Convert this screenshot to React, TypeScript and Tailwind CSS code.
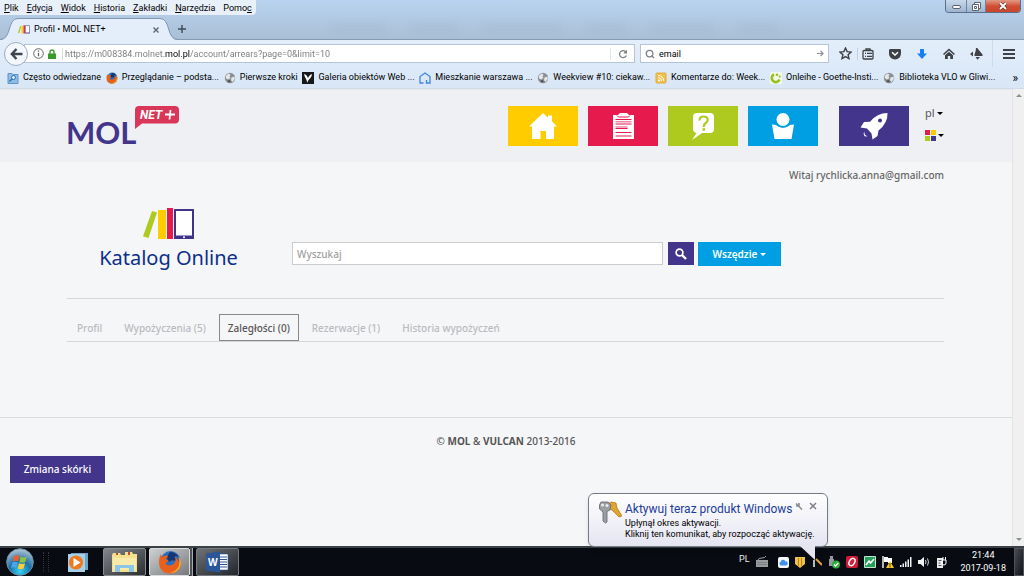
import type { ReactNode } from 'react';
import { Search } from 'lucide-react';

const menu = [
  ['', 'P', 'lik'],
  ['', 'E', 'dycja'],
  ['', 'W', 'idok'],
  ['', 'H', 'istoria'],
  ['', 'Z', 'akładki'],
  ['', 'N', 'arzędzia'],
  ['Pomo', 'c', ''],
];

function Globe() {
  return (
    <svg width="12" height="12" viewBox="0 0 12 12">
      <circle cx="6" cy="6" r="5.2" fill="#8b8f94" />
      <path d="M2 3.5 4.5 1.5 6.5 2.5 5.5 4.5 6.5 6 4 7.5 1.6 6zM7.5 5.5 10.5 4.5 10.8 7 8.5 10 7 8z" fill="#e4e6e8" />
      <path d="M3.5 8.5 6 8 6.5 10.5 4 10z" fill="#4c5054" />
    </svg>
  );
}

function FirefoxLogo({ size }: { size: number }) {
  return (
    <svg width={size} height={size} viewBox="0 0 24 24">
      <circle cx="12.5" cy="11" r="10" fill="#2a6fc0" />
      <path d="M12 2c4 0 7 2 9 5-2-1-4-1-5 0 2 1 2 3 1 4-1-1-4-1-6 1l-2-4 1-3z" fill="#17356f" />
      <path d="M3 4c0 2 .6 2.500 1.500 3C6 5.500 8 5.500 10 6c-.5 1.500-2 2-2 3.500l2.500 1c-.5 2-2.500 1.500-3 3 1.500 2.500 5.500 2.500 8 .5 2.500-2 2.500-5 1.500-7 3 2 3.500 4 3.500 5.500 1-2 .5-5-.5-6.500 3 3 3.700 7 2 11-2 4.500-6 6.500-10 6.500C5.500 23.500 1 19 1 12.500 1 9 1.600 6 3 4z" fill="#e8601c" />
      <path d="M20.500 6.500c3 3.500 3 8.500.5 12-2 3-6 4.500-9 4.500 5-1.500 9-4.500 9.500-9.500.2-2.500-.2-5-1-7z" fill="#fbb829" />
    </svg>
  );
}

const bookmarks: { label: string; icon: ReactNode }[] = [
  {
    label: 'Często odwiedzane',
    icon: (
      <svg width="12" height="12" viewBox="0 0 12 12">
        <path d="M1 1.500h4l1 1h5v9H1z" fill="#8dbde8" stroke="#5f94c8" />
        <circle cx="6.500" cy="5.500" r="2" fill="#d9ecfb" stroke="#2f6ca8" />
        <path d="m5 7-2.500 2.500" stroke="#2f6ca8" strokeWidth="1.300" />
      </svg>
    ),
  },
  { label: 'Przeglądanie – podsta...', icon: <FirefoxLogo size={12} /> },
  { label: 'Pierwsze kroki', icon: <Globe /> },
  {
    label: 'Galeria obiektów Web ...',
    icon: (
      <svg width="12" height="12" viewBox="0 0 12 12">
        <path d="M0 0h12v12H0z" fill="#16181b" />
        <path d="M2 2c2 .5 3 1.500 4 4 1-2 1.500-3 4-4-.5 3-1.500 4.500-3.500 6L5 11c.5-3-2-4.500-3-9z" fill="#fff" />
      </svg>
    ),
  },
  {
    label: 'Mieszkanie warszawa ...',
    icon: (
      <svg width="12" height="12" viewBox="0 0 12 12" fill="none" stroke="#3d86e8" strokeWidth="1.300">
        <path d="M4.500 11H1V4.500L6 1l5 3.500V11H7.500V8" />
      </svg>
    ),
  },
  { label: 'Weekview #10: ciekaw...', icon: <Globe /> },
  {
    label: 'Komentarze do: Week...',
    icon: (
      <svg width="12" height="12" viewBox="0 0 12 12">
        <rect x="1" y="1" width="10" height="10" rx="1" fill="#f4c04c" stroke="#e3a935" />
        <circle cx="4" cy="8.500" r="1" fill="#fff" />
        <path d="M3 5.500A3.500 3.500 0 0 1 6.500 9M3 3.300A5.700 5.700 0 0 1 8.700 9" fill="none" stroke="#fff" />
      </svg>
    ),
  },
  {
    label: 'Onleihe - Goethe-Insti...',
    icon: (
      <svg width="12" height="12" viewBox="0 0 12 12">
        <path d="M0 0h12v12H0z" fill="#f4f8ec" />
        <path d="M4 2.500A4 4 0 1 0 9.500 7.500" fill="none" stroke="#96c11f" strokeWidth="2.600" />
        <circle cx="7" cy="2.800" r="1.300" fill="#96c11f" />
        <circle cx="9.800" cy="4.600" r="1.100" fill="#96c11f" />
      </svg>
    ),
  },
  { label: 'Biblioteka VLO w Gliwi...', icon: <Globe /> },
];

function Books({ width, height }: { width: number; height: number }) {
  return (
    <svg width={width} height={height} viewBox="0 0 52 34" preserveAspectRatio="none">
      <path d="m9 4 5 1.600L5.500 31 0 29.200z" fill="#afca1f" />
      <path d="M15 3h8v29h-8z" fill="#ffcc00" />
      <path d="M24 1h6v31h-6z" fill="#e61a4c" />
      <path d="M31 2h20v30H31z" fill="#3f3489" />
      <path d="M33 4h16v24.500H33z" fill="#fff" />
      <circle cx="41" cy="30.200" r="1" fill="#fff" />
    </svg>
  );
}

function TitleBar() {
  return (
    <div className="flex h-4 items-start justify-between">
      <nav className="flex h-[15px] items-center gap-2 rounded-br bg-[#edf3fb]/90 px-1">
        {menu.map(([before, key, after]) => (
          <button key={before + key + after} className="whitespace-nowrap text-[9px] leading-[14px] text-black">
            {before}
            <span className="underline underline-offset-1">{key}</span>
            {after}
          </button>
        ))}
      </nav>
      <div className="mr-[3px] flex h-[13px] overflow-hidden rounded-b border border-t-0 border-[#5b6f8a]">
        <button aria-label="Minimalizuj" className="flex w-[21px] items-end justify-center border-r border-[#6f839d] bg-linear-to-b from-[#c8d9ec] to-[#9db4cf] pb-[3px]">
          <span className="h-[4px] w-[9px] rounded-xs border border-[#5b6470] bg-white" />
        </button>
        <button aria-label="Przywróć" className="flex w-[19px] items-center justify-center border-r border-[#6f839d] bg-linear-to-b from-[#c8d9ec] to-[#9db4cf]">
          <svg width="9" height="9" viewBox="0 0 9 9" fill="#fff" stroke="#5b6470">
            <path d="M2.500.5h6v6h-6z" />
            <path d="M.5 2.500h6v6h-6z" />
            <path d="M2.500 4.500h2v2h-2z" />
          </svg>
        </button>
        <button aria-label="Zamknij" className="flex w-[34px] items-center justify-center bg-linear-to-b from-[#e29a86] via-[#cf4f36] to-[#c8452a]">
          <svg width="10" height="8" viewBox="0 0 10 8">
            <path d="m2 1 6 6M8 1 2 7" stroke="#6a3a38" strokeWidth="3.200" />
            <path d="m2 1 6 6M8 1 2 7" stroke="#fff" strokeWidth="1.800" />
          </svg>
        </button>
      </div>
    </div>
  );
}

function TabStrip() {
  return (
    <div className="flex h-6 items-end border-b border-[#8499b3] pt-1">
      <div className="-mb-px flex h-[22px] items-stretch">
        <svg width="18" height="22" viewBox="0 0 18 22">
          <path d="M0 22C12 22 7 .5 18 .5V22z" fill="#e3eefa" />
          <path d="M0 21.500C12 21.500 7 .5 18 .5" fill="none" stroke="#8297b2" />
        </svg>
        <div className="flex w-[142px] items-center border-t border-[#8297b2] bg-[#e3eefa]">
          <Books width={12} height={9} />
          <span className="ml-1 flex-1 text-[9px] text-black">Profil • MOL NET+</span>
          <button aria-label="Zamknij kartę">
            <svg width="8" height="8" viewBox="0 0 8 8" stroke="#5c6773" strokeWidth="1.400">
              <path d="m1.500 1.500 5 5m0-5-5 5" />
            </svg>
          </button>
        </div>
        <svg width="18" height="22" viewBox="0 0 18 22">
          <path d="M18 22C6 22 11 .5 0 .5V22z" fill="#e3eefa" />
          <path d="M18 21.500C6 21.500 11 .5 0 .5" fill="none" stroke="#8297b2" />
        </svg>
      </div>
      <button aria-label="Nowa karta" className="mb-[6px]">
        <svg width="8" height="8" viewBox="0 0 8 8" stroke="#3f4b59" strokeWidth="1.400">
          <path d="M4 0v8M0 4h8" />
        </svg>
      </button>
      <div className="mb-2 ml-36 flex gap-6 opacity-10 blur-xs">
        <span className="h-1.5 w-14 bg-[#5d7086]" />
        <span className="h-1.5 w-12 bg-[#5d7086]" />
        <span className="h-1.5 w-20 bg-[#5d7086]" />
        <span className="h-1.5 w-10 bg-[#5d7086]" />
        <span className="h-1.5 w-16 bg-[#5d7086]" />
        <span className="h-1.5 w-10 bg-[#5d7086]" />
      </div>
    </div>
  );
}

function Toolbar() {
  return (
    <div className="flex h-[27px] items-center pl-1 pr-[9px]">
      <button aria-label="Wstecz" className="z-10 flex size-[24px] shrink-0 items-center justify-center rounded-full border border-[#9aacc2] bg-[#f4f8fd]">
        <svg width="13" height="12" viewBox="0 0 13 12" fill="none" stroke="#3c444d" strokeWidth="2.400">
          <path d="M6.500 1 1.800 6l4.700 5M2 6h10.500" />
        </svg>
      </button>
      <div className="-ml-1 flex h-[19px] flex-1 items-center border border-[#b4c5d9] bg-white pl-2">
        <svg width="11" height="11" viewBox="0 0 11 11" fill="none" stroke="#666">
          <circle cx="5.500" cy="5.500" r="4.800" />
          <path d="M5.500 2.500v1.200M5.500 4.800v3.500" strokeWidth="1.300" />
        </svg>
        <svg className="ml-[4px]" width="8" height="10" viewBox="0 0 8 10">
          <path d="M2 5V3a2 2 0 0 1 4 0v2" fill="none" stroke="#3a9a2c" strokeWidth="1.400" />
          <path d="M0 4.500h8V10H0z" fill="#3a9a2c" />
        </svg>
        <span className="ml-[6px] h-3 w-px bg-[#dcdcdc]" />
        <input
          aria-label="Adres"
          readOnly
          defaultValue="https://m008384.molnet.mol.pl/account/arrears?page=0&limit=10"
          className="ml-[2px] h-4 flex-1 bg-[linear-gradient(to_right,#7a7a7a_99px,#000_99px,#000_125px,#7a7a7a_125px)] bg-clip-text text-[9px] text-transparent outline-none"
        />
        <button aria-label="Odśwież" className="flex h-3 w-6 items-center justify-center border-l border-[#dfe5ec]">
          <svg width="10" height="10" viewBox="0 0 10 10">
            <path d="M8 3.200A3.500 3.500 0 1 0 8.300 6.500" fill="none" stroke="#7b8188" strokeWidth="1.300" />
            <path d="M9 .8v3.700H5.300z" fill="#7b8188" />
          </svg>
        </button>
      </div>
      <div className="ml-[5px] flex h-[19px] w-[189px] items-center gap-[4px] border border-[#b4c5d9] bg-white px-1">
        <Search size={10} color="#7b8188" strokeWidth={3} />
        <input aria-label="Szukaj w sieci" defaultValue="email" className="h-4 min-w-0 flex-1 text-[9px] text-black outline-none" />
        <button aria-label="Szukaj">
          <svg width="7" height="7" viewBox="0 0 7 7" fill="none" stroke="#8b9096" strokeWidth="1.200">
            <path d="M0 3.500h6M3.500 1 6 3.500 3.500 6" />
          </svg>
        </button>
      </div>
      <div className="ml-[10px] flex items-center text-[#3e4247]">
        <button aria-label="Dodaj zakładkę">
          <svg width="13" height="13" viewBox="0 0 12 12" fill="none" stroke="currentColor" strokeWidth="1.300">
            <path d="m6 1 1.500 3.300 3.600.4-2.700 2.400.8 3.600L6 8.900l-3.200 1.800.8-3.600L.9 4.700l3.600-.4z" />
          </svg>
        </button>
        <span className="ml-[5px] mr-[4px] h-3 w-px bg-[#c3d0de]" />
        <button aria-label="Zakładki">
          <svg width="12" height="12" viewBox="0 0 12 12" fill="none" stroke="currentColor" strokeWidth="1.300">
            <rect x="1" y="2.500" width="10" height="8.500" rx="1" />
            <path d="M4 2.500V1h4v1.500M3 5.300h1M5 5.300h5M3 8.300h1M5 8.300h5" />
          </svg>
        </button>
        <button aria-label="Pocket" className="ml-[15px]">
          <svg width="12" height="12" viewBox="0 0 12 12">
            <path d="M1.200 1h9.600q1.200 0 1.200 1.200V5.500a6 6 0 0 1-12 0V2.200Q0 1 1.200 1z" fill="currentColor" />
            <path d="M3 4.300 6 7l3-2.700" fill="none" stroke="#fff" strokeWidth="1.500" />
          </svg>
        </button>
        <button aria-label="Pobrane" className="ml-[15px]">
          <svg width="12" height="12" viewBox="0 0 12 12">
            <path d="M4 1h4v4.500h3L6 11 1 5.500h3z" fill="#1a7ff0" />
          </svg>
        </button>
        <button aria-label="Strona startowa" className="ml-[15px]">
          <svg width="12" height="12" viewBox="0 0 12 12">
            <path d="M6 .5 12 6l-1 1-5-4.500L1 7 0 6z" fill="currentColor" />
            <path d="M2 7.200 6 3.700l4 3.500V11H7.200V8H4.800v3H2z" fill="currentColor" />
          </svg>
        </button>
        <button aria-label="Dodatek" className="ml-[15px]">
          <svg width="13" height="12" viewBox="0 0 13 12">
            <path d="M6 0q1.500-.5 2 1l4.500 5.500q.5 1.500-1 1.500H5q-1 0-.5-1.500Q6 3 6 0z" fill="currentColor" />
            <path d="M0 6l3-2.500v5zM5.500 9H10l-2.500 2.800z" fill="currentColor" />
          </svg>
        </button>
        <span className="ml-[9px] mr-[10px] h-[27px] w-px bg-[#cfdbe8]" />
        <button aria-label="Otwórz menu">
          <svg width="12" height="12" viewBox="0 0 12 12" stroke="currentColor" strokeWidth="2">
            <path d="M0 2h12M0 6h12M0 10h12" />
          </svg>
        </button>
      </div>
    </div>
  );
}

function BookmarksBar() {
  return (
    <div className="flex h-[21px] items-center overflow-hidden pl-[7px] pr-[6px]">
      <div className="flex flex-1 items-center justify-between">
        {bookmarks.map(({ label, icon }) => (
          <a key={label} href="#" className="flex items-center gap-1 whitespace-nowrap text-[9px] text-black">
            {icon}
            {label}
          </a>
        ))}
      </div>
      <button aria-label="Więcej zakładek" className="ml-[17px] text-[12px] leading-3">»</button>
    </div>
  );
}

function MolLogo() {
  return (
    <svg className="overflow-visible" width="112" height="40" viewBox="0 0 112 40">
      <text x="-1" y="38" fill="#43358b" fontFamily="Lato, sans-serif" fontWeight="700" fontSize="31">MOL</text>
      <path d="M72 0h36q4 0 4 4v9.500q0 4-4 4H75L68 23V4q0-4 4-4z" fill="#d93658" />
      <text x="73" y="13" fill="#fff" fontFamily="Roboto, sans-serif" fontWeight="700" fontStyle="italic" fontSize="12">NET</text>
      <path d="M98 8.500h10M103.500 4l-1 9.500" stroke="#fff" strokeWidth="1.800" />
    </svg>
  );
}

function Caret() {
  return (
    <svg width="6" height="3" viewBox="0 0 6 3">
      <path d="M0 0h6L3 3z" fill="currentColor" />
    </svg>
  );
}

function SiteHeader() {
  return (
    <header className="flex items-start justify-between border-t border-[#e6e8ec] bg-[#eff0f4] pb-4 pl-[67px] pr-[68px] pt-4">
      <a href="#" aria-label="MOL NET+">
        <MolLogo />
      </a>
      <div className="flex">
        <nav className="flex gap-[10px]">
          <a href="#" aria-label="Start" className="flex h-10 w-[70px] items-center justify-center bg-[#ffcc00]">
            <svg width="28" height="28" viewBox="0 0 28 28" fill="#fff">
              <path d="m14 1 5 4.800V3.500h4v6l5 4.900h-3V27h-8v-8h-5.500v8H3V14.400H0z" />
            </svg>
          </a>
          <a href="#" aria-label="Zestawienia" className="flex h-10 w-[70px] items-center justify-center bg-[#e61a4c]">
            <svg width="21" height="28" viewBox="0 0 21 28">
              <path d="M0 3h5l2-2h7l2 2h5v24H0z" fill="#fff" />
              <path d="M4 3.500 5.500 5h10L17 3.500" fill="none" stroke="#e61a4c" />
              <path d="M2.500 7.500h16M2.500 12h16M2.500 16.500h12M2.500 20.500h16M2.500 24h16" stroke="#e61a4c" strokeWidth="1.200" />
              <path d="M2.500 9.800h16M2.500 15h12" stroke="#f08aa3" strokeWidth="1.500" />
            </svg>
          </a>
          <a href="#" aria-label="Pomoc" className="flex h-10 w-[70px] items-center justify-center bg-[#afca1f]">
            <svg width="22" height="28" viewBox="0 0 22 28">
              <path d="M5 1h13q4 0 4 4v12q0 4-4 4h-8L0 28l4.500-7Q1 20 1 17V5q0-4 4-4z" fill="#fff" />
              <path d="M7.500 8.500q0-4 4-4 4.200 0 4.200 3.500 0 1.700-2 3-2 1.200-2 4" fill="none" stroke="#afca1f" strokeWidth="2.200" />
              <path d="M10.500 16.200h2.600v2.500h-2.600z" fill="#afca1f" />
            </svg>
          </a>
          <a href="#" aria-label="Konto" className="flex h-10 w-[70px] items-center justify-center bg-[#009fe3]">
            <svg width="22" height="28" viewBox="0 0 22 28" fill="#fff">
              <circle cx="11" cy="7.500" r="6.500" />
              <path d="M0 12.500 4 13q7 5.500 14 0l4-.5L19.500 27h-17z" />
              <path d="M4 12.500q7 5.500 14 0" fill="none" stroke="#009fe3" strokeWidth=".8" />
            </svg>
          </a>
          <a href="#" aria-label="Nowości" className="ml-[11px] flex h-10 w-[70px] items-center justify-center bg-[#43358b]">
            <svg width="28" height="28" viewBox="0 0 28 28" fill="#fff">
              <path d="M27.500 1q.5 10-9 17.500l-1 5.500-5 3.500-1-6-4.500-5-6.500-1L4 10l6-.2Q17 1 27.500 1z" />
              <circle cx="20" cy="8.500" r="2" fill="#43358b" />
              <path d="M5 19.500q-2 2.500 2.500 5l-3-.2-1-3z" />
            </svg>
          </a>
        </nav>
        <div className="ml-4 flex flex-col gap-1">
          <button className="flex items-center gap-[2px] text-[11px] font-normal leading-[14px] text-[#555]">
            pl
            <span className="text-black"><Caret /></span>
          </button>
          <button aria-label="Kolory" className="flex items-center gap-[2px] pt-[6px] text-black">
            <svg width="11" height="11" viewBox="0 0 11 11">
              <path d="M0 0h5v5H0z" fill="#e61a4c" />
              <path d="M6 0h5v5H6z" fill="#ffcc00" />
              <path d="M0 6h5v5H0z" fill="#afca1f" />
              <path d="M6 6h5v5H6z" fill="#43358b" />
            </svg>
            <Caret />
          </button>
        </div>
      </div>
    </header>
  );
}

const tabs = ['Profil', 'Wypożyczenia (5)', 'Zaległości (0)', 'Rezerwacje (1)', 'Historia wypożyczeń'];

function Catalog() {
  return (
    <main className="pl-[67px] pr-[68px]">
      <p className="pt-[5px] text-right text-[10px] leading-4 text-[#666]">Witaj rychlicka.anna@gmail.com</p>
      <div className="flex items-start pb-[26px] pt-6">
        <a href="#" className="mr-[22px] flex w-[203px] flex-col items-center text-[20px] font-normal leading-7 text-[#0b2f8a]">
          <Books width={52} height={34} />
          <span className="mt-[3px]">Katalog Online</span>
        </a>
        <form className="mr-[163px] mt-[35px] flex flex-1 items-start" onSubmit={(e) => e.preventDefault()}>
          <input
            aria-label="Wyszukaj"
            placeholder="Wyszukaj"
            className="h-[23px] min-w-0 flex-1 border border-[#ccc] bg-white px-1 text-[10px] outline-none placeholder:text-[#a0a0a0]"
          />
          <button aria-label="Szukaj w katalogu" className="ml-[5px] flex h-[23px] w-[26px] items-center justify-center bg-[#43358b]">
            <svg width="12" height="12" viewBox="0 0 12 12" fill="none" stroke="#fff">
              <circle cx="4.500" cy="4.500" r="3.400" strokeWidth="1.700" />
              <path d="m7 7 4 4" strokeWidth="2.400" />
            </svg>
          </button>
          <button type="button" className="ml-1 flex h-6 w-[83px] items-center justify-center gap-[3px] bg-[#009fe3] text-[10px] font-semibold text-white">
            Wszędzie
            <Caret />
          </button>
        </form>
      </div>
      <nav className="flex gap-1 border-y border-[#d3d6db] pl-px pt-[15px]">
        {tabs.map((tab) => (
          <a
            key={tab}
            href="#"
            className={
              tab === 'Zaległości (0)'
                ? 'h-[27px] border border-[#888] px-2 text-[10px] leading-[26px] text-[#555]'
                : 'h-[27px] border border-transparent px-2 text-[10px] leading-[26px] text-[#b9bbbf]'
            }
          >
            {tab}
          </a>
        ))}
      </nav>
    </main>
  );
}

function Balloon() {
  return (
    <aside className="absolute bottom-[29px] right-[196px] flex h-[54px] w-[240px] gap-[3px] rounded-md border border-[#767b88] bg-linear-to-b from-white to-[#e4e5f1] pl-[9px] pt-[6px] text-black shadow-md">
      <svg className="shrink-0" width="24" height="24" viewBox="0 0 24 24">
        <path d="m10 4 3-2 5 1 1 5 5 8-3 1-7-7-4-2z" fill="#e3a229" stroke="#a87416" strokeWidth=".7" />
        <path d="M3 2h7l3 3-1 5-3 1.500V22l-1.500 1L5 21v-9L1.500 9V5z" fill="#9b9ea3" stroke="#606369" strokeWidth=".8" />
        <circle cx="4.500" cy="5" r="1.500" fill="#eee" />
        <circle cx="9" cy="5.500" r="1.500" fill="#eee" />
      </svg>
      <div className="whitespace-nowrap">
        <h2 className="text-[12px] leading-[18px] text-[#1c3d9b]">Aktywuj teraz produkt Windows</h2>
        <p className="text-[9px] leading-[11px]">Upłynął okres aktywacji.</p>
        <p className="text-[9px] leading-[11px]">Kliknij ten komunikat, aby rozpocząć aktywację.</p>
      </div>
      <div className="absolute right-[10px] top-[8px] flex gap-[6px]">
        <button aria-label="Opcje">
          <svg width="8" height="8" viewBox="0 0 8 8" fill="none" stroke="#8a8d95" strokeWidth="1.600">
            <path d="M1 1.500 3.500 4l3.500 3.500M1 4h3V1" />
          </svg>
        </button>
        <button aria-label="Zamknij powiadomienie">
          <svg width="8" height="8" viewBox="0 0 8 8" stroke="#7c7f87" strokeWidth="1.500">
            <path d="m1 1 6 6m0-6L1 7" />
          </svg>
        </button>
      </div>
      <svg className="absolute right-[12px] top-full" width="15" height="14" viewBox="0 0 15 14">
        <path d="M0 0h15v14z" fill="#e4e5f1" />
      </svg>
    </aside>
  );
}

function Taskbar() {
  return (
    <footer className="flex h-[30px] items-center border-t-2 border-[#3a4147] bg-[#080c12] pl-[6px] text-[#e8eaec]">
      <button aria-label="Start">
        <svg width="28" height="28" viewBox="0 0 28 28">
          <defs>
            <radialGradient id="orb" cx=".5" cy=".85" r=".8">
              <stop offset="0" stopColor="#35d4f4" />
              <stop offset=".5" stopColor="#1c6fa6" />
              <stop offset="1" stopColor="#a9bfce" />
            </radialGradient>
          </defs>
          <circle cx="14" cy="14" r="13.300" fill="url(#orb)" stroke="#6b8da3" />
          <path d="M8 8q3-1.500 5.500 0l-1.300 5.300Q9.500 12 6.700 13.300z" fill="#e8602c" />
          <path d="M14.700 8.700q3 1.500 6 0L19.300 14q-3 1.500-5.900 0z" fill="#8cc63e" />
          <path d="M6.300 14.500q3-1.300 5.500 0l-1.300 5.300Q8 18.500 5 19.800z" fill="#4aa5e8" />
          <path d="M13 15.200q3 1.500 6 0l-1.400 5.300q-3 1.500-5.900 0z" fill="#fccc3a" />
        </svg>
      </button>
      <span className="ml-[9px] h-5 w-[6px] border-x border-dotted border-[#30363c]" />
      <button aria-label="Odtwarzacz" className="ml-[18px]">
        <svg width="21" height="19" viewBox="0 0 21 19">
          <path d="M4 0h17v17H4z" fill="#6ba4c9" />
          <path d="M1 1h17v18H1z" fill="#a9cfe6" />
          <circle cx="9" cy="9.500" r="7" fill="#ee7a20" />
          <path d="m6.500 5 7 4.500-7 4.500z" fill="#fff" />
        </svg>
      </button>
      <button aria-label="Eksplorator" className="ml-[15px] flex h-7 w-[43px] items-center justify-center rounded-xs border border-[#8b8e91] bg-linear-to-br from-[#83868a] to-[#2b2f34]">
        <svg width="25" height="22" viewBox="0 0 25 22">
          <path d="M1 2h7l1 2h4V1h7l1 2h4v18H0V4z" fill="#f3df8c" />
          <path d="M1 7h23v12H1z" fill="#f8eaa8" />
          <path d="M3 21v-7h19v7h-5v-4H8v4z" fill="#8cc7ea" />
          <path d="M4 2h2v2H4zM16 1h2v3h-2z" fill="#bb4b36" />
        </svg>
      </button>
      <button aria-label="Firefox" className="ml-[3px] flex h-7 w-[41px] items-center justify-center rounded-xs border border-[#d8dadb] bg-linear-to-br from-[#cfd0d2] to-[#77797c]">
        <FirefoxLogo size={24} />
      </button>
      <span className="h-7 w-[3px] border-r border-[#a9abad] bg-[#4d5053]" />
      <button aria-label="Word" className="ml-[3px] flex h-7 w-[43px] items-center justify-center rounded-xs border border-[#777a7e] bg-linear-to-br from-[#6f7276] to-[#23272c]">
        <svg width="23" height="22" viewBox="0 0 23 22">
          <path d="M11 3h11v16H11z" fill="#fff" stroke="#2b579a" strokeWidth=".6" />
          <path d="M14 6h7M14 8.500h7M14 11h7M14 13.500h7M14 16h7" stroke="#2b579a" />
          <path d="m0 2.500 14-2v21l-14-2z" fill="#2b579a" />
          <text x="2" y="15" fill="#fff" fontFamily="'Open Sans', sans-serif" fontWeight="700" fontSize="10">W</text>
        </svg>
      </button>
      <div className="ml-auto flex items-center gap-[6px]">
        <span className="mb-1 text-[9px]">PL</span>
        <svg width="12" height="12" viewBox="0 0 12 12">
          <path d="M0 4h12v7H0z" fill="#9a9da0" />
          <path d="M2 4q0-2 4-2 3 0 4-2" fill="none" stroke="#9a9da0" />
          <path d="M1.500 6.500h9M1.500 8.500h9" stroke="#5d6064" strokeDasharray="1 1" />
        </svg>
        <svg className="ml-[4px]" width="11" height="11" viewBox="0 0 11 11">
          <rect width="11" height="11" rx="2" fill="#f6f9fc" />
          <path d="M3 8.500a2 2 0 0 1-.3-3.800 2.500 2.500 0 0 1 4.800-.3A2 2 0 0 1 8 8.500z" fill="#3d93ee" />
        </svg>
        <svg width="10" height="11" viewBox="0 0 10 11">
          <path d="M0 0h10v7l-5 4-5-4z" fill="#f2c14b" />
          <path d="M3.500 1v8M6.500 1v8" stroke="#b98517" />
        </svg>
        <svg width="11" height="12" viewBox="0 0 11 12">
          <path d="m5 3 6 6" stroke="#e0a534" strokeWidth="2" />
          <path d="M3 4v7" stroke="#b5b8bc" strokeWidth="2" />
        </svg>
        <svg width="12" height="13" viewBox="0 0 12 13">
          <path d="M1 3h5v7H1zM2 0h3v3H2z" fill="#95999d" />
          <circle cx="8" cy="8.500" r="4" fill="#2fae3f" />
          <path d="m6 8.500 1.500 1.500L10.300 7" fill="none" stroke="#fff" strokeWidth="1.300" />
        </svg>
        <svg width="12" height="12" viewBox="0 0 12 12">
          <rect width="12" height="12" rx="2" fill="#d21a36" />
          <ellipse cx="6" cy="6" rx="2.600" ry="4" transform="rotate(30 6 6)" fill="none" stroke="#fff" strokeWidth="1.500" />
        </svg>
        <svg width="12" height="12" viewBox="0 0 12 12">
          <path d="M.5.5h11v11H.5z" fill="#24a05b" stroke="#c4e6d1" />
          <path d="m2 9 3-4 1.500 2L10 3" fill="none" stroke="#fff" strokeWidth="1.500" />
        </svg>
        <svg width="12" height="12" viewBox="0 0 12 12">
          <path d="M1 0v12" stroke="#fff" strokeWidth="1.400" />
          <path d="M2 1h4v1h4v5H6V6H2z" fill="#fff" />
          <path d="m8 5 4 7H4z" fill="#f5c626" />
          <path d="M8 7.500v2M8 10.300v1" stroke="#222" />
        </svg>
        <svg width="12" height="10" viewBox="0 0 12 10" fill="#f0f2f4">
          <path d="M0 8h1.500v2H0zM2.500 6.500H4V10H2.500zM5 4.500h1.500V10H5zM7.500 2.500H9V10H7.500zM10 0h1.500v10H10z" />
        </svg>
        <svg width="12" height="12" viewBox="0 0 12 12">
          <path d="M0 4h2.500L6 1v10L2.500 8H0z" fill="#f0f2f4" />
          <path d="M7.500 4q1 2 0 4M9.500 2.500q2 3.500 0 7" fill="none" stroke="#d0d3d6" />
        </svg>
        <svg width="11" height="12" viewBox="0 0 11 12">
          <path d="M1 2h6v10H1z" fill="#e9ebed" />
          <path d="M6 4v3q0 2 2 2t2-2V4zM7 1v3M9.500 1v3" fill="none" stroke="#fff" />
          <path d="M2.500 4.500h3M2.500 7h2M2.500 9.500h3" stroke="#555" />
        </svg>
      </div>
      <div className="ml-[14px] text-center text-[9px] leading-[13px] text-white">
        <div>21:44</div>
        <div>2017-09-18</div>
      </div>
      <button aria-label="Pokaż pulpit" className="ml-2 h-7 w-[10px] border border-[#4e5358] bg-linear-to-br from-[#4a4e53] to-[#101317]" />
    </footer>
  );
}

export default function App() {
  return (
    <div className="relative flex min-h-screen flex-col font-[Roboto,sans-serif]">
      <div className="bg-linear-to-b from-[#b9d3f0] to-[#a9bfd4]">
        <TitleBar />
        <TabStrip />
      </div>
      <div className="border-b border-[#cfdbe8] bg-linear-to-b from-[#e3eefa] to-[#d8e6f6]">
        <Toolbar />
        <BookmarksBar />
      </div>
      <div className="flex flex-1">
        <div className="flex-1 bg-[#f5f6f8] font-['Noto_Sans',sans-serif] font-medium">
          <SiteHeader />
          <Catalog />
          <div className="mt-[75px] border-t border-[#d8dbdf] pt-[15px] text-center text-[10px] leading-4 text-[#555]">
            © <b>MOL</b> &amp; <b>VULCAN</b> 2013-2016
          </div>
          <button className="ml-[10px] mt-[7px] h-[27px] w-[95px] bg-[#43358b] text-[10px] text-white">Zmiana skórki</button>
        </div>
        <div className="flex w-3 flex-col items-center justify-between border-l border-[#e2e3e5] bg-[#f0f0f1] py-[5px] text-[#8c8f93]">
          <span className="rotate-180"><Caret /></span>
          <Caret />
        </div>
      </div>
      <Taskbar />
      <Balloon />
    </div>
  );
}
